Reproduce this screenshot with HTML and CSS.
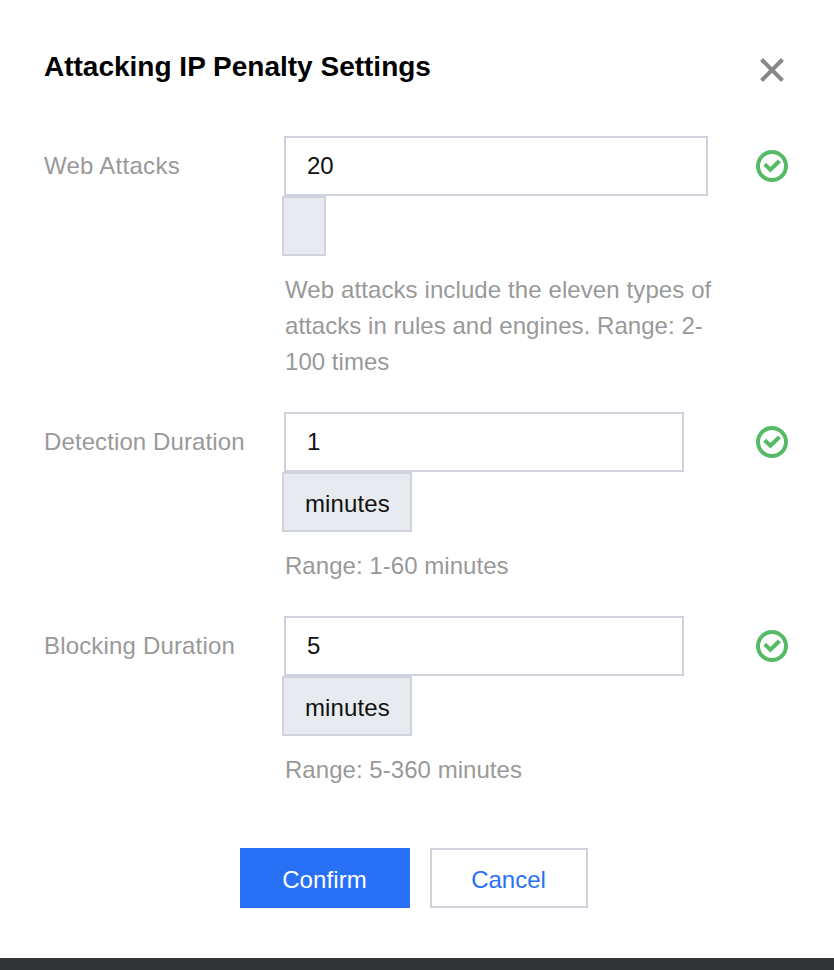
FILE: index.html
```html
<!DOCTYPE html>
<html lang="en">
<head>
<meta charset="utf-8">
<title>Attacking IP Penalty Settings</title>
<link rel="stylesheet" href="styles.css">
</head>
<body>
<main class="dialog">
  <header class="header">
    <h1 class="title">Attacking IP Penalty Settings</h1>
    <svg class="close" viewBox="0 0 24 24"><path d="M1.5 1.5l21 21M22.5 1.5l-21 21"/></svg>
  </header>
  <section class="row">
    <div class="label web">Web Attacks</div>
    <div class="field">
      <div class="input wide">20</div>
      <div class="unit empty"></div>
      <p class="hint"><span class="lead">Web attacks include the eleven types of</span><br>attacks in rules and engines. Range: 2-<br>100 times</p>
    </div>
    <svg class="ok" viewBox="0 0 32 32"><circle cx="16" cy="16" r="14"/><path d="M8.7 14.2l5.7 5.6 9-8.8"/></svg>
  </section>
  <section class="row">
    <div class="label detection">Detection Duration</div>
    <div class="field">
      <div class="input">1</div>
      <div class="unit">minutes</div>
      <p class="hint">Range: 1-60 minutes</p>
    </div>
    <svg class="ok" viewBox="0 0 32 32"><circle cx="16" cy="16" r="14"/><path d="M8.7 14.2l5.7 5.6 9-8.8"/></svg>
  </section>
  <section class="row">
    <div class="label blocking">Blocking Duration</div>
    <div class="field">
      <div class="input">5</div>
      <div class="unit">minutes</div>
      <p class="hint">Range: 5-360 minutes</p>
    </div>
    <svg class="ok" viewBox="0 0 32 32"><circle cx="16" cy="16" r="14"/><path d="M8.7 14.2l5.7 5.6 9-8.8"/></svg>
  </section>
  <footer class="actions">
    <button class="btn primary">Confirm</button>
    <button class="btn">Cancel</button>
  </footer>
</main>
</body>
</html>
```
FILE: styles.css
```css
* { box-sizing: border-box; }
body { margin: 0; background: #333437; font-family: "Liberation Sans", Arial, sans-serif; font-size: 24px; color: #111; }
.dialog { height: 958px; background: #fff; padding: 48px 44px 0 44px; }
.header { display: flex; justify-content: space-between; height: 88px; }
.title { margin: 0; font-size: 28px; line-height: 38px; font-weight: 700; color: #000; }
.close { width: 24px; height: 24px; margin: 10px 6px 0 0; fill: none; stroke: #888; stroke-width: 4; }
.row { display: grid; grid-template-columns: 240px 1fr 34px; margin-bottom: 32px; }
.label { line-height: 60px; color: #999; }
.web { letter-spacing: 0.27px; }
.detection { letter-spacing: 0.1px; }
.blocking { letter-spacing: 0.17px; }
.input { width: 400px; height: 60px; border: 2px solid #cfd3de; padding-left: 21px; line-height: 56px; }
.wide { width: 424px; }
.unit { width: 130px; height: 60px; margin-left: -2px; border: 2px solid #cfd3de; background: #e7eaef; padding-left: 21px; line-height: 60px; letter-spacing: 0.12px; }
.empty { width: 44px; }
.hint { margin: 16px 0 0 1px; line-height: 36px; color: #999; white-space: nowrap; letter-spacing: 0.04px; }
.lead { letter-spacing: 0.1px; }
.ok { width: 32px; height: 32px; margin: 14px 0 0; fill: none; stroke: #55bb66; stroke-width: 4; }
.actions { display: flex; gap: 20px; padding: 28px 0 0 196px; }
.btn { width: 158px; height: 60px; padding: 4px 1px 0 0; border: 2px solid #cfd3de; background: #fff; color: #2871f6; font: inherit; }
.primary { width: 170px; background: #2871f6; border-color: #2871f6; color: #fff; letter-spacing: 0.1px; }
```
